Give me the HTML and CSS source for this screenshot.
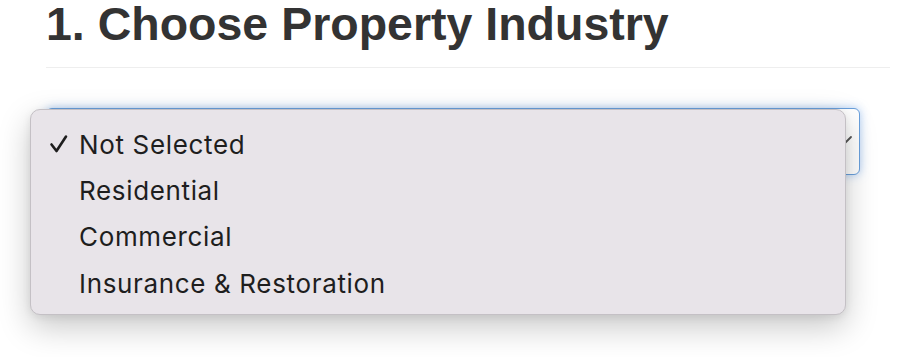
FILE: index.html
```html
<!DOCTYPE html>
<html lang="en">
<head>
<meta charset="utf-8">
<title>Choose Property Industry</title>
<link rel="stylesheet" href="styles.css">
</head>
<body>
<div class="page">
  <h1 class="title">1. Choose Property Industry</h1>
  <div class="rule"></div>
  <div class="field">
    <div class="select">
      <svg class="chevron" width="20" height="12" viewBox="0 0 20 12"><path d="M2 2 L10 10 L18 2" fill="none" stroke="#555" stroke-width="1.8" stroke-linecap="round" stroke-linejoin="round"/></svg>
    </div>
    <ul class="menu">
      <li class="item checked">
        <svg class="check" width="20" height="20" viewBox="0 0 20 20"><path d="M2.5 10.5 L7.5 17 L17 2.5" fill="none" stroke="#1e1e1e" stroke-width="2.6" stroke-linecap="round" stroke-linejoin="round"/></svg>
        <span>Not Selected</span>
      </li>
      <li class="item"><span>Residential</span></li>
      <li class="item"><span>Commercial</span></li>
      <li class="item"><span>Insurance &amp; Restoration</span></li>
    </ul>
  </div>
</div>
</body>
</html>
```

FILE: styles.css
```css
html, body {
  margin: 0;
  padding: 0;
  background: #ffffff;
  min-height: 357px;
}

.page {
  padding: 0 8px 0 46px;
  min-height: 357px;
  box-sizing: border-box;
}

.title {
  margin: 0;
  font-family: "Liberation Sans", Arial, sans-serif;
  font-weight: bold;
  font-size: 46.5px;
  line-height: 48px;
  color: #333333;
}

.rule {
  margin-top: 19px;
  height: 1px;
  background: #eeeeee;
}

.field {
  position: relative;
  margin-top: 40px;
  width: 814px;
}

.select {
  box-sizing: border-box;
  height: 67px;
  border: 1.5px solid #6aa0dc;
  border-radius: 6px;
  background: #ffffff;
  box-shadow: 0 0 10px rgba(102, 160, 233, 0.55);
  display: flex;
  justify-content: flex-end;
  align-items: center;
  padding-right: 6px;
}

.chevron {
  margin-top: -2px;
}

.menu {
  position: absolute;
  left: -16px;
  top: 1px;
  width: 816px;
  box-sizing: border-box;
  margin: 0;
  padding: 11px 0 8px 0;
  list-style: none;
  background: #e8e4e9;
  border: 1px solid #c4c0c5;
  border-radius: 10px;
  box-shadow: 0 12px 32px rgba(0, 0, 0, 0.22), 0 2px 8px rgba(0, 0, 0, 0.08);
}

.item {
  display: flex;
  align-items: center;
  height: 46.3px;
  padding-left: 48px;
  position: relative;
  font-family: Inter, "Noto Sans", sans-serif;
  font-size: 26px;
  letter-spacing: 0.65px;
  color: #1e1e1e;
  white-space: nowrap;
}

.check {
  position: absolute;
  left: 18px;
  top: 13px;
}
```
